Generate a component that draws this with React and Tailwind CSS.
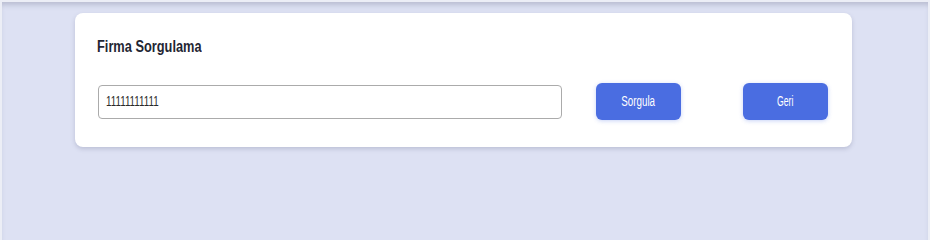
export default function App() {
  return (
    <div
      className="h-[240px] w-[930px] overflow-hidden border-x-2 border-t-2 border-[#eceef6] bg-[#dde1f3] pl-[73px] pr-[76px] pt-[11px] shadow-[inset_0_5px_5px_-2px_rgba(120,124,150,0.35)]"
      style={{ fontFamily: '"Liberation Sans", Arial, sans-serif' }}
    >
      <div className="rounded-lg bg-white pl-[22px] pr-[24px] pt-[22px] pb-[27px] shadow-[0_2px_4px_rgba(90,95,130,0.25)]">
        <h2 className="h-6 text-base font-bold leading-6 text-[#1f2633]">
          <span className="inline-block origin-left scale-x-[0.8]">Firma Sorgulama</span>
        </h2>
        <div className="mt-6 flex items-center">
          <div className="ml-px flex h-[34px] w-[464px] items-center rounded border border-[#ababab] bg-white pl-[7px] text-[14px] text-[#2a2a2a]">
            <span className="inline-block origin-left scale-x-[0.7]">11111111111</span>
          </div>
          <button className="ml-[34px] flex h-[37px] w-[85px] items-center justify-center rounded-md bg-[#4a6de1] text-[14px] text-white shadow-[0_1px_4px_rgba(74,109,225,0.3)]">
            <span className="inline-block scale-x-[0.7]">Sorgula</span>
          </button>
          <button className="ml-[62px] flex h-[37px] w-[85px] items-center justify-center rounded-md bg-[#4a6de1] text-[14px] text-white shadow-[0_1px_4px_rgba(74,109,225,0.3)]">
            <span className="inline-block scale-x-[0.62]">Geri</span>
          </button>
        </div>
      </div>
    </div>
  )
}
